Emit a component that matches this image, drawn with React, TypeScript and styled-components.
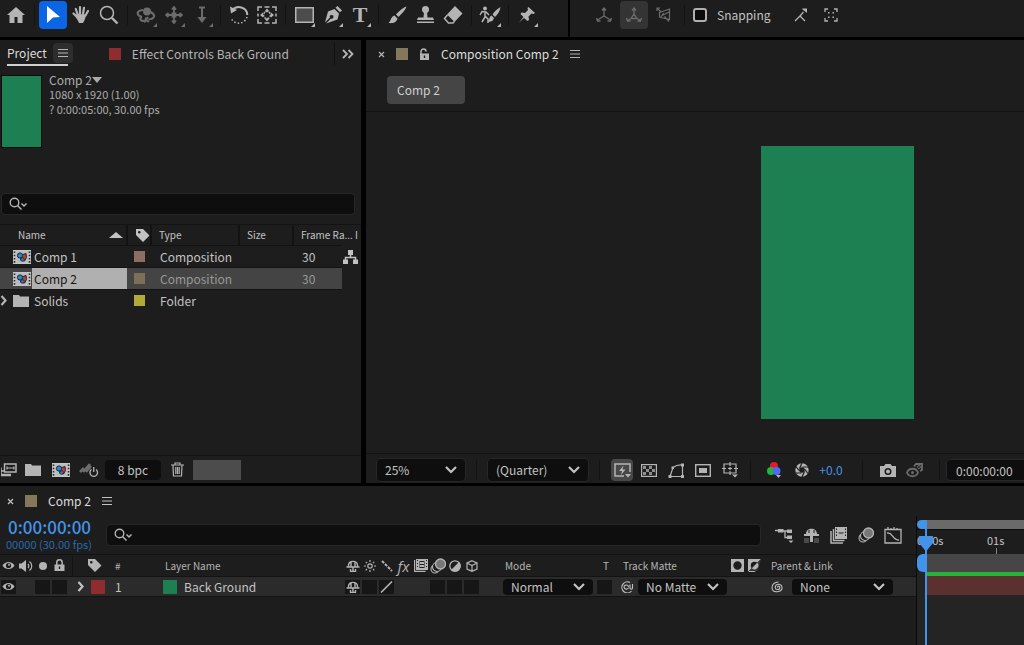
import React from "react";
import styled, { createGlobalStyle, css } from "styled-components";

const c = {
  panel: "#1d1d1d",
  field: "#0e0e0e",
  edge: "#272727",
  line: "#131313",
  text: "#c2c2c2",
  icon: "#b4b4b4",
  dim: "#6c6c6c",
  blue: "#4294ea",
  green: "#1d8053",
  sand: "#84785c",
  red: "#8f2c30",
};

const Global = createGlobalStyle`
  * { box-sizing: border-box; }
  html, body { margin: 0; background: #000; }
  body {
    font-family: "Noto Sans CJK SC", "Noto Sans", sans-serif;
    font-size: 12px;
    line-height: 20px;
    color: ${c.text};
    overflow-x: hidden;
  }
  button, input, select { font: inherit; color: inherit; }
  button { border: 0; padding: 0; background: none; }
`;

/* ---------- icons, drawn on whole-pixel boxes ---------- */

const s = { fill: "none", stroke: "currentColor", strokeWidth: 1.5 } as const;
const reel = (
  <>
    <rect x="0" y="0" width="18" height="14" fill="#c4c4c4" />
    <path d="M1.5 1.5v12M16.5 1.5v12" stroke="#2a2a2a" strokeWidth="1.6" strokeDasharray="1.6 1.6" />
    <rect x="3.5" y="1.500" width="11" height="11" fill="#b4bcc4" />
    <path d="M8.500 5l4.500-1.500.5 4-2 3.500-4-1z" fill="#b9432f" stroke="#28252a" />
    <circle cx="7" cy="5.500" r="2.600" fill="#2f86cc" stroke="#1d2730" />
    <circle cx="9.500" cy="9.500" r="1.800" fill="#3a78b4" stroke="#1d2730" strokeWidth=".8" />
  </>
);
const shy = (
  <path d="M.5 7h13M2.500 7V5.500C2.500 0 11.500 0 11.500 5.500V7M5 1.500V7M9 1.500V7M7 7v5M4.500 9v2.500h5V9" {...s} strokeWidth={1.400} />
);
const balls = (
  <>
    <circle cx="5" cy="11" r="4" {...s} strokeWidth={1.100} />
    <circle cx="7" cy="9" r="4.500" {...s} fill={c.panel} strokeWidth={1.100} />
    <circle cx="10.500" cy="6" r="5" stroke="currentColor" strokeWidth="1.300" fill="#777" />
  </>
);
const frames = (
  <>
    <path d="M1 4v12h12" {...s} />
    <path d="M3.500 2v11.500h11" {...s} />
    <path fillRule="evenodd" d="M5 0h12v12H5zM6 1.500v1.500h1V1.500zM6 4.500v1.500h1V4.500zM6 7.500v1.500h1V7.500zM15 1.500v1.500h1V1.500zM15 4.500v1.500h1V4.500zM15 7.500v1.500h1V7.500zM8.500 5.400v1h5v-1z" fill="currentColor" />
  </>
);
const framesSmall = (
  <>
    <path d="M.6 1v11.400h11" {...s} strokeWidth={1.200} />
    <path fillRule="evenodd" d="M2 0h12v11H2zM3 1v1h1V1zM3 4v1h1V4zM3 7v1h1V7zM12 1v1h1V1zM12 4v1h1V4zM12 7v1h1V7zM5.500 2v7h5V2z" fill="currentColor" />
    <path d="M6 3h4v2H6zM6 6h4v2H6z" fill="currentColor" />
  </>
);
const swirl = (
  <path d="M11.500 10A5.500 5.500 0 1 1 10 1.500M10 3.500v3.500c0 1.500 2.500 1.500 2.500 0V3M8.500 6C8.500 3 4 3.500 4 6s4 3 4.500.5" {...s} strokeWidth={1.100} />
);
const whorl = (
  <path d="M6.500 6.500c-.5-1.500 2-2 2.300 0 .3 2.500-4.300 3-4.600 0C4 2.500 10.500 2 11 6.500c.3 5-9.500 6-10 .5C.8 3.500 3.500 1 7.500 1" {...s} strokeWidth={1.100} />
);

const icons: Record<string, [number, number, React.ReactNode]> = {
  home: [18, 18, <path d="M9 1l9 8h-2.500v8h-5v-6h-3v6h-5V9H0z" fill="currentColor" />],
  arrow: [14, 18, <path d="M1 0l13 11-7 .5L1 17z" fill="#fff" />],
  hand: [
    18,
    18,
    <>
      <path d="M5 11L1.500 7.500M5.500 8L3.800 3M8 8V1.200M11 8l1-6.200M13.500 9.500L16 5" stroke="currentColor" strokeWidth="2.200" strokeLinecap="round" fill="none" />
      <path d="M4.500 8l9.500.5c-.5 4-1.500 6-3 8.500H7C6 14 4 12.500 3.500 10z" fill="currentColor" />
    </>,
  ],
  zoom: [20, 20, <><circle cx="8" cy="8" r="6.500" {...s} /><path d="M13 13l5.500 5.500" {...s} strokeWidth={2.400} /></>],
  orbit: [20, 18, <><circle cx="11" cy="5.500" r="4" fill="currentColor" /><path d="M7 4C-1 5 1 9.500 6 11M14.500 6c6 3 4 7-2 7.500M6 11c-4 2 0 5 3 3.500M9 12c2 1 1 3-1 4M12 11l-2 3 3 2" {...s} strokeWidth={2} /></>],
  pan: [18, 18, <path d="M9 2.500v13M2.500 9h13M7 3.500L9 1l2 2.500M7 14.500L9 17l2-2.500M3.500 7L1 9l2.500 2M14.500 7L17 9l-2.500 2M7.500 7.500h3v3h-3z" {...s} strokeWidth={1.800} />],
  dolly: [12, 18, <><path d="M3 1.500h6M6 1v13" {...s} strokeWidth={2} /><path d="M1.500 11h9L6 17z" fill="currentColor" /></>],
  rotate: [20, 20, <><path d="M3 5.500C8-.5 18 2 18.300 10" {...s} strokeWidth={2} /><path d="M18 12A8.500 8.500 0 0 1 2 13" {...s} strokeDasharray="1.500 2" /><path d="M1 1.500l1 7 6-3.500z" fill="currentColor" /></>],
  anchor: [20, 18, <><path d="M1 5V1h4M15 1h4v4M19 13v4h-4M5 17H1v-4M7.500 1h5M7.500 17h5M1 7.500v3M19 7.500v3" {...s} /><circle cx="10" cy="9" r="3.500" {...s} strokeDasharray="2 1" /><path d="M10 2.500l2.500 3h-5zM10 15.500l2.500-3h-5zM3 9l3-2.500v5zM17 9l-3-2.500v5z" fill="currentColor" /></>],
  rect: [19, 16, <rect x=".75" y=".75" width="17.500" height="14.500" fill="#4c4c4c" stroke="currentColor" strokeWidth="1.500" />],
  pen: [19, 18, <><path fillRule="evenodd" d="M11.500 3l4.500 4.500-1.500 6L3 17.500l5-5a1.800 1.800 0 1 0-1-1l-5 5L5 5.500z" fill="currentColor" /><path d="M12.500 1.800L14.500 0 19 4.500l-2 1.800z" fill="currentColor" /></>],
  brush: [19, 18, <><path d="M18.500.5c-3.500 1-8 5-10.500 8l2.500 2.500c3-3 7-7 8-10.500z" fill="currentColor" /><path d="M6.500 9.500l3 3C8.500 17 4 17.500.5 17 3 15.500 2.500 10.500 6.500 9.500z" fill="currentColor" /></>],
  stamp: [19, 18, <><circle cx="9.500" cy="3.500" r="3.500" fill="currentColor" /><path d="M8 6h3l.5 5.500H17l1 2.500H1l1-2.500h5.500zM1 15.500h17v1.500H1z" fill="currentColor" /></>],
  eraser: [20, 18, <><path d="M12 0l7.500 7.500-8 8.500L4 8.500z" fill="currentColor" /><path d="M4.500 9L1.500 12.500l4 4.500h4.500l1.500-1.500" {...s} /></>],
  roto: [22, 18, <><circle cx="6" cy="2.500" r="2" fill="currentColor" /><path d="M1 9l2-3.500L7 6l3 3M6 6v5l-3 5M6 10l3 3v4" {...s} strokeWidth={1.500} /><path d="M21.500 1C18 3 15 6 13.500 8.500L16 11c3-3 5-6 5.500-10zM12.500 9.500l2.500 2.500c-1 4-4 4-6.500 3.500 2-1 1.500-5 4-6z" fill="currentColor" /></>],
  pin: [18, 18, <path d="M10.500 1l6.500 6-1.500 1-2-.5-3 3 .5 3.500-1.500 1L6 12l-5 4.500L5.500 11 2.500 8l1-1.500L7 7l3-3-.5-2z" fill="currentColor" />],
  axisLocal: [18, 16, <path d="M9 1.500V9M9 9l-6.500 4M9 9l6.500 4M7 3.500L9 1l2 2.500M1.500 11l1 3h3M16.500 11l-1 3h-3" {...s} strokeWidth={1.300} />],
  axisWorld: [18, 16, <path d="M9 1.500V7l3 4.500H6L9 7M6 11.500l-3.500 2M12 11.500l3.500 2M7 3.500L9 1l2 2.500M1.500 11l1 3h3M16.500 11l-1 3h-3" {...s} strokeWidth={1.300} />],
  axisView: [16, 16, <path d="M1 4V1h3M1.500 1.500L5 5M3.500 5.500L13.500 2v10.500L3.500 10zM6 8.500L13 5M4.500 11l3-5M8.500 9.500l4.500 5" {...s} strokeWidth={1.200} />],
  snapEdge: [14, 16, <><path d="M1 14l5-5 5 5M6 9l3.500-4" {...s} strokeWidth={1.300} /><path d="M8.500 1.500H13V6L8 2z" fill="currentColor" /></>],
  snapBox: [14, 14, <><path d="M1 4V1h3M10 1h3v3M13 10v3h-3M4 13H1v-3" {...s} strokeWidth={1.300} /><path d="M4 4h1.500v1.500H4zM8.500 4H10v1.500H8.500zM4 8.500h1.500V10H4zM8.500 8.500H10V10H8.500z" fill="currentColor" /></>],
  menu: [10, 10, <path d="M0 1.500h10M0 5h10M0 8.500h10" {...s} strokeWidth={1.200} />],
  more: [12, 10, <path d="M1 1l4 4-4 4M6.500 1l4 4-4 4" {...s} strokeWidth={1.800} />],
  close: [7, 7, <path d="M1 1l5 5M6 1L1 6" {...s} strokeWidth={1.200} />],
  unlock: [11, 13, <><path d="M2 6V3.500a2.500 2.500 0 0 1 5 0" {...s} /><path fillRule="evenodd" d="M1 5.500h9V12H1zM4.800 7.500v2.500h1.400V7.500z" fill="currentColor" /></>],
  lock: [11, 13, <><path d="M2.800 6V3.500a2.700 2.700 0 0 1 5.400 0V6" {...s} /><path fillRule="evenodd" d="M.5 5.500h10V12H.5zM4.800 7.500v2.500h1.400V7.500z" fill="currentColor" /></>],
  caret: [10, 6, <path d="M0 0h10L5 6z" fill="currentColor" />],
  caretUp: [14, 6, <path d="M0 6h14L7 0z" fill="currentColor" />],
  search: [19, 14, <><circle cx="5.500" cy="5.500" r="4.300" {...s} strokeWidth={1.400} /><path d="M8.500 8.500l4 4M12.500 6.500l2.500 2.500 2.500-2.500" {...s} /></>],
  tag: [15, 15, <path fillRule="evenodd" d="M1 1h7l6.500 6.500-6.500 6.500L1 7zM3 4.200a1.300 1.300 0 1 0 2.600 0 1.300 1.300 0 1 0-2.600 0z" fill="currentColor" />],
  reel: [18, 14, reel],
  folder: [16, 13, <path d="M0 1h6l1 1.500h9V13H0z" fill="currentColor" />],
  tree: [15, 14, <><path d="M7.500 4v4M2.500 11V7.500h10V11" {...s} /><path d="M5 0h5v5H5zM0 9.500h5V14H0zM10 9.500h5V14h-5z" fill="currentColor" /></>],
  chevronR: [7, 11, <path d="M1.500 1l4 4.500-4 4.500" {...s} strokeWidth={2.200} />],
  chevronD: [12, 8, <path d="M1 1l5 5 5-5" {...s} strokeWidth={2.200} />],
  interpret: [16, 14, <><path d="M3.500 1h11.500v8H3.500z" {...s} /><path d="M6 5h7M6 3.500v3M13 3.500v3" {...s} strokeWidth={1.200} /><path d="M0 4.500v7h10M0 8h3M0 12.500h10" {...s} /></>],
  adjust: [20, 15, <><path d="M1 10l4-4M4 10l7-8M7 10l5-6" stroke={c.dim} strokeWidth="2.600" /><path d="M12.500 7.500a3.800 3.800 0 1 0 4.500 0M14.750 5v5" {...s} strokeWidth={1.300} /></>],
  trash: [13, 15, <path d="M0 3h13M4 3V1h5v2M2 3.500l.5 10.500h8L11 3.500M4.800 5v7M6.500 5v7M8.200 5v7" {...s} strokeWidth={1.200} />],
  preview: [17, 15, <><path d="M10 13H1V1h15v8" {...s} /><path d="M9.500 2.500L5 8h3l-1 4 4.500-5.500h-3zM11 11h6l-3 3.500z" fill="currentColor" /></>],
  checker: [16, 13, <><rect x=".6" y=".6" width="14.800" height="11.800" {...s} strokeWidth={1.200} /><path d="M2 2h3v3H2zM8 2h3v3H8zM5 5h3v3H5zM11 5h3v3h-3zM2 8h3v3H2zM8 8h3v3H8z" fill="currentColor" opacity=".75" /></>],
  mask: [17, 15, <><path d="M2 13.500L5 4.500Q9 1.500 14.500 2v11.500z" {...s} strokeWidth={1.200} /><path d="M.5 12h3v3h-3zM3.500 3.500h2.500v2.500H3.500zM13 .5h3v3h-3zM13 12h3v3h-3z" fill="currentColor" /></>],
  region: [16, 13, <><rect x=".7" y=".7" width="14.600" height="11.600" {...s} strokeWidth={1.400} /><path d="M4 4h8v5H4z" fill="currentColor" /></>],
  guides: [17, 16, <><path d="M2 2h12v9H2zM8 0v4M8 9v4M0 6.500h4M12 6.500h4M6 6.500h4M8 5v3" {...s} strokeWidth={1.200} /><path d="M10 12.500h6l-3 3z" fill="currentColor" /></>],
  rgb: [14, 16, <><circle cx="7" cy="4" r="4" fill="#e8192c" /><circle cx="4" cy="9" r="4" fill="#22b53a" /><circle cx="9.500" cy="9" r="4" fill="#4d6df0" /><path d="M9 13h5l-2.500 3z" fill="currentColor" /></>],
  shutter: [14, 14, <><circle cx="7" cy="7" r="4.700" {...s} strokeWidth={4} /><path d="M7 0L4.500 5.500M13 4L7.500 4M13 10.500L9.500 6M7 14l2.500-5.500M1 10h5.500M1 3.500L4.500 8" stroke={c.panel} strokeWidth="1.200" /></>],
  camera: [16, 13, <path fillRule="evenodd" d="M0 2h4l1.500-2h5L12 2h4v11H0zM4.500 7.500a3.500 3.500 0 1 0 7 0 3.500 3.500 0 1 0-7 0zM6 7.500a2 2 0 1 0 4 0 2 2 0 1 0-4 0z" fill="currentColor" />],
  snapshot: [18, 16, <><path d="M1 10.500c2-5 9-5 11 0-2 5-9 5-11 0z" {...s} strokeWidth={1.800} /><circle cx="6.500" cy="10.500" r="1.500" fill="currentColor" /><path d="M8 4.500l2-2.500h6v6l-2 1" {...s} strokeWidth={1.800} /><circle cx="13" cy="5" r="1.500" {...s} strokeWidth={1} /></>],
  eye: [13, 9, <><path d="M.5 4.500C3-.3 10-.3 12.500 4.500 10 9.300 3 9.300.5 4.500z" fill="currentColor" /><circle cx="6.500" cy="4.500" r="2.600" fill={c.panel} /><circle cx="7" cy="3.800" r="1" fill="currentColor" /></>],
  speaker: [14, 12, <><path d="M0 3.500h2.500L7 0v12L2.500 8.500H0z" fill="currentColor" /><path d="M9 4c1 1 1 3 0 4M10.500 1.500c3 2 3 7 0 9" {...s} strokeWidth={1.200} /></>],
  dot: [8, 8, <circle cx="4" cy="4" r="4" fill="currentColor" />],
  shy: [14, 12, shy],
  sun: [12, 12, <><circle cx="6" cy="6" r="2.200" {...s} strokeWidth={1.200} /><path d="M6 0v2M6 10v2M0 6h2M10 6h2M1.800 1.800l1.300 1.300M9 9l1.300 1.300M10.200 1.800L9 3M3 9l-1.300 1.300" {...s} strokeWidth={1.200} /></>],
  dashes: [12, 12, <path d="M1 1l10 10" {...s} strokeWidth={2} strokeDasharray="3 1.200" />],
  slash: [13, 12, <path d="M1 11.500L12 .5" {...s} strokeWidth={1.600} />],
  frames: [17, 17, frames],
  framesSmall: [14, 13, framesSmall],
  balls: [16, 16, balls],
  half: [12, 12, <><circle cx="6" cy="6" r="5.200" {...s} strokeWidth={1.300} /><path d="M10 2L2 10A5.500 5.500 0 0 0 10 2z" fill="currentColor" /></>],
  cube: [12, 12, <path d="M6 .7l5 2.300v6L6 11.300 1 9V3zM1 3l5 2.500L11 3M6 5.500v6" {...s} strokeWidth={1.200} />],
  matte: [13, 13, <path fillRule="evenodd" d="M0 0h13v13H0zM2.300 6.500a4.200 4.200 0 1 0 8.400 0 4.200 4.200 0 1 0-8.400 0z" fill="currentColor" />],
  matteAlt: [13, 13, <><path d="M0 0h13L0 13z" fill="currentColor" /><path d="M13 0L0 13h7l3-2z" fill="#333" /><circle cx="6.500" cy="6.500" r="3.700" fill="#1b1b1b" /><path d="M9.200 3.800L3.800 9.200A3.700 3.700 0 0 0 9.200 3.800zM1 12h7l-2 1H1z" fill="currentColor" /></>],
  swirl: [14, 12, swirl],
  whorl: [13, 12, whorl],
  flow: [19, 15, <><path d="M0 2.500h4M8 3h4M10 3v6.500h3" {...s} strokeWidth={1.300} /><path d="M3 1h5.500v3.500H3zM12 1.500h5v3.500h-5zM12 7.500h5V11h-5zM13.500 12.500h5L16 15z" fill="currentColor" /></>],
  shyBar: [17, 15, <><path d="M3 6C3-1 14-1 14 6h2v2H1V6z" fill="currentColor" /><path d="M6 2v3M11 2v3" stroke={c.panel} /><path d="M7 8h3v6H7z" fill="currentColor" /><path d="M1 10h5v5H1zM11 10h5v5h-5z" fill="#4a4a4a" /></>],
  graph: [18, 17, <><path d="M1 2.500h16V16H1z" {...s} strokeWidth={1.300} /><path d="M4 0v3M7 1v2M10 0v3M13 1v2M3 6c6-1 5 7 12 7" {...s} strokeWidth={1.300} /></>],
};

const Svg = styled.svg`
  display: block;
  flex: none;
`;

const Icon = ({ name }: { name: string }) => {
  const [w, h, body] = icons[name];
  return (
    <Svg width={w} height={h} viewBox={`0 0 ${w} ${h}`} aria-hidden="true">
      {body}
    </Svg>
  );
};

/* ---------- shared parts ---------- */

const Page = styled.div`
  min-height: 100vh;
  display: flex;
  flex-direction: column;
  gap: 3px;
`;

const Divider = styled.span<{ $space?: number }>`
  flex: none;
  width: 1px;
  height: 20px;
  margin: 0 ${(p) => p.$space ?? 4}px;
  background: ${c.line};
`;

const IconButton = styled.button<{ $w?: number; $dim?: boolean; $on?: boolean }>`
  flex: none;
  display: inline-flex;
  align-items: center;
  justify-content: center;
  width: ${(p) => p.$w ?? 24}px;
  height: 22px;
  border-radius: 4px;
  color: ${(p) => (p.$dim ? c.dim : c.icon)};
  background: ${(p) => (p.$on ? "#484848" : "none")};
`;

const Swatch = styled.span<{ $color: string; $size?: number }>`
  flex: none;
  display: inline-block;
  width: ${(p) => p.$size ?? 12}px;
  height: ${(p) => p.$size ?? 12}px;
  background: ${(p) => p.$color};
`;

const SearchBox = styled.label`
  display: flex;
  align-items: center;
  flex: 1;
  height: 22px;
  padding-left: 7px;
  border: 1px solid ${c.edge};
  border-radius: 4px;
  background: ${c.field};
  color: ${c.icon};
`;

const SearchInput = styled.input`
  flex: 1;
  min-width: 0;
  border: 0;
  outline: 0;
  background: none;
`;

const SelectWrap = styled.span<{ $w: number; $slim?: boolean }>`
  position: relative;
  flex: none;
  display: inline-flex;
  align-items: center;
  width: ${(p) => p.$w}px;
  height: ${(p) => (p.$slim ? 16 : 22)}px;
  border-radius: 4px;
  background: ${c.field};
  box-shadow: ${(p) => (p.$slim ? "none" : `0 0 0 1px ${c.edge}`)};
  > svg {
    position: absolute;
    right: 8px;
    pointer-events: none;
  }
`;

const Select = styled.select`
  appearance: none;
  width: 100%;
  height: 100%;
  padding: 0 20px 0 8px;
  border: 0;
  outline: 0;
  background: none;
  line-height: 16px;
`;

const Dropdown = ({ label, value, w, slim }: { label: string; value: string; w: number; slim?: boolean }) => (
  <SelectWrap $w={w} $slim={slim}>
    <Select aria-label={label} defaultValue={value}>
      <option>{value}</option>
    </Select>
    <Icon name="chevronD" />
  </SelectWrap>
);

/* ---------- toolbar ---------- */

const Toolbar = styled.header`
  display: flex;
  gap: 2px;
  height: 37px;
`;

const ToolStrip = styled.div<{ $grow?: boolean }>`
  display: flex;
  align-items: center;
  flex: ${(p) => (p.$grow ? "1" : "0 0 568px")};
  padding: 0 ${(p) => (p.$grow ? 20 : 2)}px 7px;
  background: ${c.panel};
`;

const Tool = styled.button<{ $state?: "active" | "dim" | "held"; $menu?: boolean; $wide?: boolean }>`
  position: relative;
  flex: none;
  display: flex;
  align-items: center;
  justify-content: center;
  width: 28px;
  height: 28px;
  margin-right: ${(p) => (p.$wide ? 2 : 0)}px;
  border-radius: 4px;
  color: ${(p) => (p.$state === "dim" || p.$state === "held" ? c.dim : c.icon)};
  background: ${(p) => (p.$state === "active" ? "#0a66e4" : p.$state === "held" ? "#343434" : "none")};
  ${(p) =>
    p.$menu &&
    css`
      &::after {
        content: "";
        position: absolute;
        right: 3px;
        bottom: 2px;
        border: 2px solid transparent;
        border-right-color: currentColor;
        border-bottom-color: currentColor;
      }
    `}
`;

const TypeGlyph = styled.span`
  font: bold 22px/24px "Liberation Serif", serif;
`;

const SnapLabel = styled.label`
  display: flex;
  align-items: center;
  gap: 10px;
  margin: 0 16px 0 4px;
`;

const SnapBox = styled.input`
  appearance: none;
  width: 14px;
  height: 14px;
  margin: 0;
  border: 2px solid #b0b0b0;
  border-radius: 3px;
  background: #0c0c0c;
`;

const toolGroups: [string, string, boolean?][][] = [
  [["home", "Home"]],
  [["arrow", "Selection"], ["hand", "Hand"], ["zoom", "Zoom"]],
  [["orbit", "Orbit", true], ["pan", "Pan", true], ["dolly", "Dolly", true]],
  [["rotate", "Rotation"], ["anchor", "Pan behind"]],
  [["rect", "Rectangle", true], ["pen", "Pen", true], ["type", "Type", true]],
  [["brush", "Brush"], ["stamp", "Clone stamp"], ["eraser", "Eraser"]],
  [["roto", "Roto brush", true]],
  [["pin", "Puppet pin", true]],
];

const TopBar = () => (
  <Toolbar>
    <ToolStrip>
      {toolGroups.map((group, i) => (
        <React.Fragment key={i}>
          {i > 0 && <Divider />}
          {group.map(([name, label, menu]) => (
            <Tool key={name} aria-label={label} $menu={menu} $state={name === "arrow" ? "active" : i === 2 ? "dim" : undefined}>
              {name === "type" ? <TypeGlyph>T</TypeGlyph> : <Icon name={name} />}
            </Tool>
          ))}
        </React.Fragment>
      ))}
    </ToolStrip>
    <ToolStrip $grow>
      <Tool aria-label="Local axis" $state="dim" $wide><Icon name="axisLocal" /></Tool>
      <Tool aria-label="World axis" $state="held" $wide><Icon name="axisWorld" /></Tool>
      <Tool aria-label="View axis" $state="dim" $wide><Icon name="axisView" /></Tool>
      <Divider />
      <SnapLabel><SnapBox type="checkbox" />Snapping</SnapLabel>
      <Tool aria-label="Snap to edges" $wide><Icon name="snapEdge" /></Tool>
      <Tool aria-label="Snap to features"><Icon name="snapBox" /></Tool>
    </ToolStrip>
  </Toolbar>
);

/* ---------- project panel ---------- */

const Workspace = styled.main`
  display: flex;
  flex: 1;
  gap: 5px;
`;

const ProjectPanel = styled.section`
  display: flex;
  flex-direction: column;
  flex: 0 0 361px;
  background: ${c.panel};
`;

const TabBar = styled.div`
  display: flex;
  align-items: center;
  height: 30px;
  padding-bottom: 2px;
`;

const Tab = styled.button<{ $active?: boolean }>`
  display: flex;
  align-items: center;
  height: 24px;
  color: ${(p) => (p.$active ? "#dcdcdc" : "#b4b4b4")};
`;

const ProjectTab = styled.div`
  display: flex;
  align-items: center;
  gap: 6px;
  margin: 0 36px 0 7px;
  height: 24px;
  border-bottom: 2px solid transparent;
  border-image: linear-gradient(to right, #cfcfcf 60px, transparent 60px) 1;
`;

const MenuButton = styled(IconButton)`
  width: 20px;
  height: 20px;
  background: #2e2e2e;
`;

const EffectTab = styled.div`
  display: flex;
  align-items: center;
  gap: 11px;
  flex: 1;
`;

const MoreTabs = styled(IconButton)`
  width: 27px;
  height: 22px;
  border-left: 1px solid #101010;
  border-radius: 0;
`;

const Info = styled.div`
  display: flex;
  gap: 7px;
  padding: 5px 0 0 1px;
  height: 123px;
`;

const Thumb = styled.div`
  width: 41px;
  height: 73px;
  border: 1px solid #0c0c0c;
  background: ${c.green};
`;

const InfoText = styled.div`
  font-size: 11px;
  line-height: 15px;
  color: #acacac;
`;

const InfoName = styled.div`
  display: flex;
  align-items: center;
  margin-top: -3px;
  font-size: 12px;
`;

const SearchRow = styled.div`
  display: flex;
  padding: 0 6px 9px 1px;
`;

const ItemTable = styled.table`
  width: 361px;
  table-layout: fixed;
  border-collapse: collapse;
  border-top: 1px solid ${c.line};
`;

const ItemHead = styled.th`
  height: 20px;
  padding: 0 0 0 7px;
  text-align: left;
  font-weight: normal;
  font-size: 10px;
  white-space: nowrap;
  overflow: hidden;
  border-left: 2px solid ${c.line};
  &:first-child { border-left: 0; }
`;

const ItemCell = styled.td<{ $fill?: string; $ink?: string }>`
  height: 22px;
  padding: 0 0 0 9px;
  line-height: 20px;
  border-top: 1px solid ${c.line};
  background: ${(p) => p.$fill ?? "none"};
  color: ${(p) => p.$ink ?? c.text};
  &:first-child { padding-left: 0; }
  &:nth-child(2) { padding-left: 7px; }
`;

const NameInner = styled.span<{ $selected?: boolean }>`
  display: flex;
  align-items: center;
  height: 21px;
  color: ${(p) => (p.$selected ? "#161616" : c.text)};
  background: ${(p) => (p.$selected ? "linear-gradient(to right, #444 32px, #b0b0b0 32px)" : "none")};
`;

const IconSlot = styled.span<{ $lead?: boolean }>`
  display: flex;
  width: ${(p) => (p.$lead ? 13 : 21)}px;
  color: ${c.icon};
`;

const HeadFlex = styled.span<{ $pad?: number }>`
  display: flex;
  align-items: center;
  justify-content: space-between;
  padding: 0 3px 0 ${(p) => p.$pad ?? 0}px;
`;

const Footer = styled.footer`
  display: flex;
  align-items: center;
  height: 28px;
  border-top: 1px solid ${c.line};
`;

const DepthButton = styled.button`
  width: 56px;
  height: 20px;
  margin: 0 4px 0 2px;
  border-radius: 4px;
  background: ${c.field};
`;

const Scrollbar = styled.div`
  width: 48px;
  height: 20px;
  margin-left: 4px;
  background: #4c4c4c;
`;

const Spacer = styled.div`
  flex: 1;
`;

const items = [
  { name: "Comp 1", icon: "reel", color: "#8b6f62", type: "Composition", rate: "30", used: true },
  { name: "Comp 2", icon: "reel", color: "#7d7058", type: "Composition", rate: "30", selected: true },
  { name: "Solids", icon: "folder", color: "#b0ab36", type: "Folder", rate: "", expand: true },
];

const Project = () => (
  <ProjectPanel>
    <TabBar>
      <ProjectTab>
        <Tab $active>Project</Tab>
        <MenuButton aria-label="Project panel menu"><Icon name="menu" /></MenuButton>
      </ProjectTab>
      <EffectTab>
        <Swatch $color={c.red} />
        <Tab>Effect Controls Back Ground</Tab>
      </EffectTab>
      <MoreTabs aria-label="More tabs"><Icon name="more" /></MoreTabs>
    </TabBar>
    <Info>
      <Thumb />
      <InfoText>
        <InfoName>Comp 2<Icon name="caret" /></InfoName>
        <div>1080 x 1920 (1.00)</div>
        <div>? 0:00:05:00, 30.00 fps</div>
      </InfoText>
    </Info>
    <SearchRow>
      <SearchBox>
        <Icon name="search" />
        <SearchInput aria-label="Search project" />
      </SearchBox>
    </SearchRow>
    <ItemTable>
      <colgroup>
        <col style={{ width: 127 }} />
        <col style={{ width: 24 }} />
        <col style={{ width: 88 }} />
        <col style={{ width: 54 }} />
        <col style={{ width: 49 }} />
        <col style={{ width: 19 }} />
      </colgroup>
      <thead>
        <tr>
          <ItemHead><HeadFlex $pad={11}>Name<Icon name="caretUp" /></HeadFlex></ItemHead>
          <ItemHead aria-label="Label"><Icon name="tag" /></ItemHead>
          <ItemHead>Type</ItemHead>
          <ItemHead>Size</ItemHead>
          <ItemHead colSpan={2}><HeadFlex>Frame Ra...<span>I</span></HeadFlex></ItemHead>
        </tr>
      </thead>
      <tbody>
        {items.map((it) => {
          const fill = it.selected ? "#444" : undefined;
          const ink = it.selected ? "#989898" : undefined;
          return (
            <tr key={it.name}>
              <ItemCell $fill={fill}>
                <NameInner $selected={it.selected}>
                  <IconSlot $lead>{it.expand && <Icon name="chevronR" />}</IconSlot>
                  <IconSlot><Icon name={it.icon} /></IconSlot>
                  {it.name}
                </NameInner>
              </ItemCell>
              <ItemCell $fill={fill}><HeadFlex><Swatch $color={it.color} $size={11} /></HeadFlex></ItemCell>
              <ItemCell $fill={fill} $ink={ink}>{it.type}</ItemCell>
              <ItemCell $fill={fill} />
              <ItemCell $fill={fill} $ink={ink}>{it.rate}</ItemCell>
              <td>{it.used && <Icon name="tree" />}</td>
            </tr>
          );
        })}
      </tbody>
    </ItemTable>
    <Spacer />
    <Footer>
      <IconButton aria-label="Interpret footage" $w={18}><Icon name="interpret" /></IconButton>
      <IconButton aria-label="New folder" $w={29}><Icon name="folder" /></IconButton>
      <IconButton aria-label="New composition" $w={27}><Icon name="reel" /></IconButton>
      <IconButton aria-label="Project settings" $w={29}><Icon name="adjust" /></IconButton>
      <DepthButton>8 bpc</DepthButton>
      <IconButton aria-label="Delete"><Icon name="trash" /></IconButton>
      <Scrollbar />
    </Footer>
  </ProjectPanel>
);

/* ---------- composition viewer ---------- */

const Viewer = styled.section`
  display: flex;
  flex-direction: column;
  flex: 1;
  min-width: 0;
  overflow: hidden;
  background: ${c.panel};
`;

const ViewerTabs = styled(TabBar)`
  gap: 11px;
  padding-left: 12px;
  color: ${c.icon};
`;

const Crumbs = styled.div`
  height: 42px;
  padding: 6px 21px;
  border-bottom: 1px solid ${c.line};
`;

const Crumb = styled.button`
  display: block;
  width: 78px;
  height: 28px;
  padding-left: 10px;
  border-radius: 4px;
  text-align: left;
  background: #454545;
  color: #cfcfcf;
`;

const Canvas = styled.div`
  flex: 1;
  display: flex;
  align-items: center;
  justify-content: flex-end;
  padding: 33px 110px 33px 0;
`;

const Solid = styled.div`
  width: 153px;
  height: 273px;
  background: ${c.green};
`;

const ViewerFooter = styled(Footer)`
  height: 30px;
  padding: 3px 0 0 11px;
`;

const Exposure = styled.button`
  flex: none;
  width: 30px;
  color: ${c.blue};
`;

const TimeField = styled.input`
  flex: none;
  width: 90px;
  height: 22px;
  padding: 0 9px;
  border: 1px solid ${c.edge};
  border-radius: 4px;
  background: ${c.field};
`;

const Composition = () => (
  <Viewer>
    <ViewerTabs>
      <Icon name="close" />
      <Swatch $color={c.sand} />
      <Icon name="unlock" />
      <Tab $active>Composition Comp 2</Tab>
      <Icon name="menu" />
    </ViewerTabs>
    <Crumbs><Crumb>Comp 2</Crumb></Crumbs>
    <Canvas><Solid /></Canvas>
    <ViewerFooter>
      <Dropdown label="Magnification" value="25%" w={88} />
      <Divider $space={11} />
      <Dropdown label="Resolution" value="(Quarter)" w={100} />
      <Divider $space={11} />
      <IconButton aria-label="Fast previews" $w={22} $on><Icon name="preview" /></IconButton>
      <IconButton aria-label="Transparency grid" $w={32}><Icon name="checker" /></IconButton>
      <IconButton aria-label="Masks" $w={22}><Icon name="mask" /></IconButton>
      <IconButton aria-label="Region of interest" $w={32}><Icon name="region" /></IconButton>
      <IconButton aria-label="Guides" $w={22}><Icon name="guides" /></IconButton>
      <Divider $space={9} />
      <IconButton aria-label="Channels" $w={28}><Icon name="rgb" /></IconButton>
      <IconButton aria-label="Exposure reset" $w={28}><Icon name="shutter" /></IconButton>
      <Exposure>+0.0</Exposure>
      <Divider $space={16} />
      <IconButton aria-label="Take snapshot" $w={18}><Icon name="camera" /></IconButton>
      <IconButton aria-label="Show snapshot" $w={36} $dim><Icon name="snapshot" /></IconButton>
      <Divider $space={6} />
      <TimeField aria-label="Preview time" defaultValue="0:00:00:00" />
    </ViewerFooter>
  </Viewer>
);

/* ---------- timeline ---------- */

const TimelinePanel = styled.section`
  min-height: 159px;
  display: flex;
  flex-direction: column;
  background: ${c.panel};
`;

const TimelineTabs = styled(TabBar)`
  gap: 11px;
  padding: 0 0 0 7px;
`;

const TimelineBody = styled.div`
  display: flex;
  flex: 1;
`;

const LayerSide = styled.div`
  flex: 0 0 917px;
  border-right: 1px solid #0a0a0a;
`;

const LayerTop = styled.div`
  display: flex;
  align-items: center;
  height: 38px;
  padding-left: 6px;
`;

const TimeReadout = styled.div`
  width: 100px;
  font-size: 17px;
  line-height: 18px;
  font-weight: 500;
  color: ${c.blue};
  padding-left: 2px;
`;

const FrameReadout = styled.div`
  margin-left: -2px;
  font-size: 11px;
  line-height: 16px;
  font-weight: normal;
  color: #2869ae;
`;

const LayerButtons = styled.div`
  display: flex;
  padding: 0 10px 0 10px;
`;

const LayerTable = styled.table`
  width: 100%;
  table-layout: fixed;
  border-collapse: collapse;
`;

const LayerHead = styled.th<{ $flush?: boolean }>`
  height: 22px;
  padding: 0 0 0 ${(p) => (p.$flush ? 0 : 7)}px;
  border-top: 1px solid ${c.line};
  text-align: left;
  font-weight: normal;
  font-size: 10px;
  white-space: nowrap;
  color: ${c.icon};
`;

const LayerCell = styled.td`
  height: 20px;
  padding: 0;
  border-top: 1px solid ${c.line};
  border-bottom: 1px solid ${c.line};
  background: #2b2b2b;
  line-height: 18px;
`;

const Row = styled.span<{ $gap?: number; $pad?: number }>`
  display: flex;
  align-items: center;
  gap: ${(p) => p.$gap ?? 0}px;
  padding-left: ${(p) => p.$pad ?? 0}px;
`;

const MatteHead = styled(Row)`
  padding-right: 3px;
`;

const Slot = styled.span<{ $box?: boolean }>`
  display: flex;
  align-items: center;
  justify-content: center;
  flex: none;
  width: 17px;
  height: 18px;
  color: ${c.icon};
  background: ${(p) => (p.$box ? "#161616" : "none")};
  background-clip: content-box;
  padding: 2px ${(p) => (p.$box ? "1px" : "0")};
`;

const Fx = styled.i`
  font: italic 15px/16px "Open Sans", sans-serif;
`;

const TimeSide = styled.div`
  position: relative;
  flex: 1;
  min-width: 0;
  overflow: hidden;
  padding-top: 4px;
  background: linear-gradient(${c.panel}, ${c.panel}) 0 0 / 100% 56px no-repeat #242424;
`;

const Navigator = styled.div`
  display: flex;
  height: 10px;
  background: linear-gradient(to right, ${c.panel} 8px, #6a6a6a 8px);
  border-bottom: 1px solid #0d0d0d;
`;

const Handle = styled.span`
  width: 8px;
  height: 100%;
  border-radius: 6px 0 0 6px;
  background: ${c.blue};
`;

const Ruler = styled.div`
  display: flex;
  height: 24px;
  padding-top: 2px;
  font-size: 11px;
  line-height: 16px;
`;

const Mark = styled.div`
  flex: 0 0 70px;
`;

const Tick = styled.div`
  width: 1px;
  height: 6px;
  margin-left: 9px;
  background: #888;
`;

const WorkArea = styled.div`
  display: flex;
  height: 18px;
  background: linear-gradient(to right, ${c.panel} 8px, #464646 8px);
`;

const Track = styled.div<{ $color: string; $h: number }>`
  height: ${(p) => p.$h}px;
  margin-left: 8px;
  background: ${(p) => p.$color};
`;

const Playhead = styled.div`
  position: absolute;
  left: 8px;
  top: 4px;
  bottom: 0;
  width: 2px;
  background: ${c.blue};
  > svg {
    position: absolute;
    left: -6px;
    top: 16px;
  }
`;

const LayerStrip = () => (
  <LayerTable>
    <colgroup>
      <col style={{ width: 76 }} />
      <col style={{ width: 32 }} />
      <col style={{ width: 50 }} />
      <col style={{ width: 186 }} />
      <col style={{ width: 154 }} />
      <col style={{ width: 98 }} />
      <col style={{ width: 20 }} />
      <col style={{ width: 148 }} />
      <col />
    </colgroup>
    <thead>
      <tr>
        <LayerHead $flush aria-label="Audio and video">
          <Row>{["eye", "speaker", "dot", "lock"].map((n) => <Slot key={n}><Icon name={n} /></Slot>)}<Divider /></Row>
        </LayerHead>
        <LayerHead aria-label="Label"><Row $pad={4}><Icon name="tag" /></Row></LayerHead>
        <LayerHead>#</LayerHead>
        <LayerHead>Layer Name</LayerHead>
        <LayerHead $flush aria-label="Switches">
          <Row>
            {["shy", "sun", "dashes", "fx", "framesSmall", "balls", "half", "cube"].map((n) => (
              <Slot key={n}>{n === "fx" ? <Fx>fx</Fx> : <Icon name={n} />}</Slot>
            ))}
          </Row>
        </LayerHead>
        <LayerHead>Mode</LayerHead>
        <LayerHead>T</LayerHead>
        <LayerHead><MatteHead $gap={4}>Track Matte<Spacer /><Icon name="matte" /><Icon name="matteAlt" /></MatteHead></LayerHead>
        <LayerHead>Parent &amp; Link</LayerHead>
      </tr>
    </thead>
    <tbody>
      <tr>
        <LayerCell><Row><Slot $box><Icon name="eye" /></Slot><Slot /><Slot $box /><Slot $box /></Row></LayerCell>
        <LayerCell><Row $gap={7} $pad={1}><Icon name="chevronR" /><Swatch $color={c.red} $size={14} /></Row></LayerCell>
        <LayerCell><Row $pad={7}>1</Row></LayerCell>
        <LayerCell><Row $gap={7} $pad={5}><Swatch $color={c.green} $size={14} />Back Ground</Row></LayerCell>
        <LayerCell>
          <Row>
            <Slot $box><Icon name="shy" /></Slot><Slot $box /><Slot $box><Icon name="slash" /></Slot>
            <Slot /><Slot /><Slot $box /><Slot $box /><Slot $box />
          </Row>
        </LayerCell>
        <LayerCell><Row $pad={5}><Dropdown label="Blending mode" value="Normal" w={90} slim /></Row></LayerCell>
        <LayerCell><Slot $box /></LayerCell>
        <LayerCell><Row $gap={4} $pad={4}><Icon name="swirl" /><Dropdown label="Track matte" value="No Matte" w={89} slim /></Row></LayerCell>
        <LayerCell><Row $gap={8} $pad={7}><Icon name="whorl" /><Dropdown label="Parent" value="None" w={101} slim /></Row></LayerCell>
      </tr>
    </tbody>
  </LayerTable>
);

const Timeline = () => (
  <TimelinePanel>
    <TimelineTabs>
      <Icon name="close" />
      <Swatch $color={c.sand} />
      <Tab $active>Comp 2</Tab>
      <Icon name="menu" />
    </TimelineTabs>
    <TimelineBody>
      <LayerSide>
        <LayerTop>
          <TimeReadout>0:00:00:00<FrameReadout>00000 (30.00 fps)</FrameReadout></TimeReadout>
          <SearchBox>
            <Icon name="search" />
            <SearchInput aria-label="Search layers" />
          </SearchBox>
          <LayerButtons>
            {["flow", "shyBar", "frames", "balls", "graph"].map((n) => (
              <IconButton key={n} aria-label={n} $w={27}><Icon name={n} /></IconButton>
            ))}
          </LayerButtons>
        </LayerTop>
        <LayerStrip />
      </LayerSide>
      <TimeSide>
        <Navigator><Handle /></Navigator>
        <Ruler>
          <Mark>0:00s</Mark>
          <Mark>01s<Tick /></Mark>
        </Ruler>
        <WorkArea><Handle /></WorkArea>
        <Track $color="#26b338" $h={4} />
        <Track $color="#5d3030" $h={19} />
        <Playhead>
          <svg width="14" height="16" viewBox="0 0 14 16" aria-hidden="true">
            <path d="M0 0h14v7l-7 8.500L0 7z" fill={c.blue} />
          </svg>
        </Playhead>
      </TimeSide>
    </TimelineBody>
  </TimelinePanel>
);

export default function App() {
  return (
    <Page>
      <Global />
      <TopBar />
      <Workspace>
        <Project />
        <Composition />
      </Workspace>
      <Timeline />
    </Page>
  );
}
